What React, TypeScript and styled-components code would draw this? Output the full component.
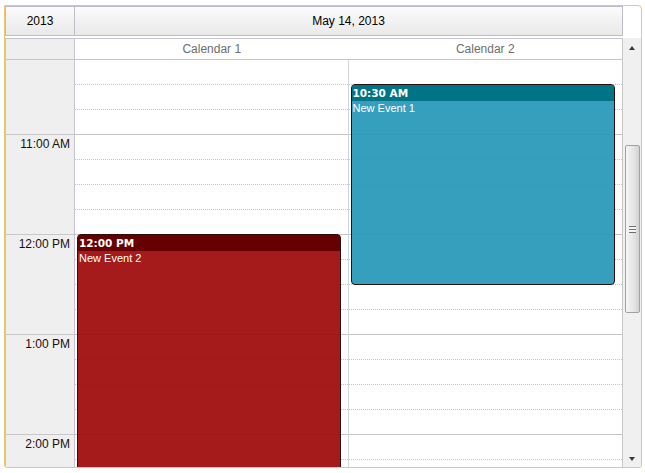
import React, { useLayoutEffect, useRef } from "react";
import styled, { createGlobalStyle } from "styled-components";

const HOUR = 100;
const FIRST_HOUR = 8;
const LAST_HOUR = 18;
const SCROLL_TOP = 226;

const calendars = ["Calendar 1", "Calendar 2"];

type Tone = "teal" | "red";

const events: { calendar: number; start: number; end: number; time: string; title: string; tone: Tone }[] = [
  { calendar: 1, start: 10.5, end: 12.5, time: "10:30 AM", title: "New Event 1", tone: "teal" },
  { calendar: 0, start: 12, end: 15, time: "12:00 PM", title: "New Event 2", tone: "red" },
];

const tones = {
  teal: { head: "#007487", body: "rgba(37, 151, 184, 0.92)" },
  red: { head: "#660000", body: "rgba(158, 10, 10, 0.93)" },
};

const hours: number[] = [];
for (let h = FIRST_HOUR; h < LAST_HOUR; h++) hours.push(h);

const label = (h: number) => `${h % 12 || 12}:00 ${h < 12 ? "AM" : "PM"}`;

const GlobalStyle = createGlobalStyle`
  body {
    margin: 0;
    background: #ffffff;
    font-family: "Liberation Sans", Arial, sans-serif;
  }
`;

export default function App() {
  const bodyRef = useRef<HTMLDivElement>(null);

  useLayoutEffect(() => {
    if (bodyRef.current) bodyRef.current.scrollTop = SCROLL_TOP;
  }, []);

  return (
    <>
      <GlobalStyle />
      <Frame>
        <TopBar>
          <YearCell>2013</YearCell>
          <DateCell>May 14, 2013</DateCell>
        </TopBar>
        <Grid>
          <Main>
            <ColumnHeader>
              <GutterHead />
              {calendars.map((c) => (
                <CalendarName key={c}>{c}</CalendarName>
              ))}
            </ColumnHeader>
            <Body ref={bodyRef}>
              <BodyInner>
                <Gutter>
                  {hours.map((h) => (
                    <HourLabel key={h}>{label(h)}</HourLabel>
                  ))}
                </Gutter>
                {calendars.map((c, ci) => (
                  <DayColumn key={c} $last={ci === calendars.length - 1}>
                    {hours.map((h) =>
                      [0, 1, 2, 3].map((q) => <Slot key={`${h}-${q}`} $hourStart={q === 0} />)
                    )}
                    {events
                      .filter((e) => e.calendar === ci)
                      .map((e) => (
                        <Event
                          key={e.title}
                          $tone={e.tone}
                          style={{
                            top: (e.start - FIRST_HOUR) * HOUR,
                            height: (e.end - e.start) * HOUR + 1,
                          }}
                        >
                          <EventHead $tone={e.tone}>{e.time}</EventHead>
                          <EventTitle>{e.title}</EventTitle>
                        </Event>
                      ))}
                  </DayColumn>
                ))}
              </BodyInner>
            </Body>
          </Main>
          <ScrollBar>
            <ArrowUp />
            <Thumb>
              <Grip />
            </Thumb>
            <ArrowDown />
          </ScrollBar>
        </Grid>
      </Frame>
    </>
  );
}

const Frame = styled.div`
  box-sizing: border-box;
  margin: 5px 0 0 4px;
  width: 638px;
  height: 463px;
  border: 1px solid #f3c36e;
  border-radius: 0 4px 3px 3px;
  display: flex;
  flex-direction: column;
  overflow: hidden;
`;

const TopBar = styled.div`
  display: flex;
  height: 30px;
  padding-right: 18px;
`;

const HeadCell = styled.div`
  box-sizing: border-box;
  height: 30px;
  border: 1px solid #bdbdca;
  background: linear-gradient(#fbfbfb, #e9e9e9);
  display: flex;
  align-items: center;
  justify-content: center;
  font-size: 12px;
  color: #000;
`;

const YearCell = styled(HeadCell)`
  width: 70px;
`;

const DateCell = styled(HeadCell)`
  flex: 1;
  border-left: 0;
`;

const Grid = styled.div`
  flex: 1;
  min-height: 0;
  display: flex;
  margin-top: 2px;
`;

const Main = styled.div`
  flex: 1;
  display: flex;
  flex-direction: column;
  border-left: 1px solid #c4c4d0;
  border-right: 1px solid #c8c8c8;
`;

const ColumnHeader = styled.div`
  box-sizing: border-box;
  height: 22px;
  display: grid;
  grid-template-columns: 69px 1fr 1fr;
  border-top: 1px solid #c4c4d0;
  border-bottom: 1px solid #c4c4d0;
`;

const GutterHead = styled.div`
  background: #efefef;
  border-right: 1px solid #c4c4d0;
`;

const CalendarName = styled.div`
  display: flex;
  align-items: center;
  justify-content: center;
  font-size: 12px;
  color: #6e6e6e;
`;

const Body = styled.div`
  flex: 1;
  min-height: 0;
  overflow: hidden;
`;

const BodyInner = styled.div`
  display: grid;
  grid-template-columns: 69px 1fr 1fr;
`;

const Gutter = styled.div`
  background: #efefef;
  border-right: 1px solid #c4c4d0;
`;

const HourLabel = styled.div`
  box-sizing: border-box;
  height: ${HOUR}px;
  border-top: 1px solid #c8c8c8;
  padding: 2px 4px 0 0;
  text-align: right;
  font-size: 12px;
  line-height: 14px;
  color: #111;
`;

const DayColumn = styled.div<{ $last: boolean }>`
  position: relative;
  border-right: ${(p) => (p.$last ? "0" : "1px solid #d6d6d6")};
`;

const Slot = styled.div<{ $hourStart: boolean }>`
  box-sizing: border-box;
  height: ${HOUR / 4}px;
  border-top: 1px ${(p) => (p.$hourStart ? "solid" : "dotted")} #c4c4c4;
`;

const Event = styled.div<{ $tone: Tone }>`
  position: absolute;
  left: 2px;
  right: 7px;
  box-sizing: border-box;
  border: 1px solid #2e0f0f;
  border-radius: 4px;
  background: ${(p) => tones[p.$tone].body};
  overflow: hidden;
  color: #fff;
`;

const EventHead = styled.div<{ $tone: Tone }>`
  height: 16px;
  background: ${(p) => tones[p.$tone].head};
  padding-left: 1px;
  font-family: "DejaVu Sans", Verdana, sans-serif;
  font-weight: bold;
  font-size: 10.5px;
  line-height: 16px;
`;

const EventTitle = styled.div`
  padding: 1px 0 0 1px;
  font-size: 11px;
  line-height: 13px;
`;

const ScrollBar = styled.div`
  width: 18px;
  background: #f0f0f0;
  display: flex;
  flex-direction: column;
  align-items: center;
`;

const ArrowUp = styled.div`
  margin-top: 8px;
  width: 0;
  height: 0;
  border-left: 3.5px solid transparent;
  border-right: 3.5px solid transparent;
  border-bottom: 4px solid #3a3a3a;
`;

const ArrowDown = styled.div`
  margin-top: auto;
  margin-bottom: 6px;
  width: 0;
  height: 0;
  border-left: 3.5px solid transparent;
  border-right: 3.5px solid transparent;
  border-top: 4px solid #3a3a3a;
`;

const Thumb = styled.div`
  box-sizing: border-box;
  margin-top: 95px;
  width: 15px;
  height: 168px;
  border: 1px solid #a2a2a2;
  border-radius: 2px;
  background: linear-gradient(90deg, #f6f6f6, #e4e4e4 60%, #d2d2d2);
  display: flex;
  align-items: center;
  justify-content: center;
`;

const Grip = styled.div`
  width: 7px;
  height: 7px;
  background: repeating-linear-gradient(#707070 0 1px, #f4f4f4 1px 3px);
`;
